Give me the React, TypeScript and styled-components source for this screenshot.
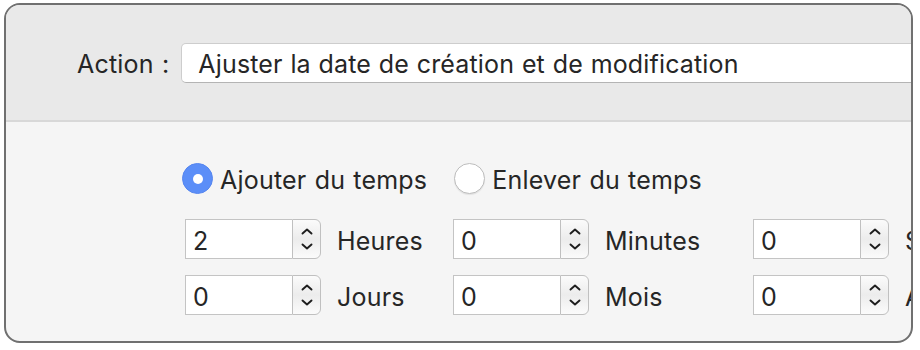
import styled, { createGlobalStyle } from 'styled-components';

const GlobalStyle = createGlobalStyle`
  body {
    margin: 0;
    background: #fff;
    font-family: Inter, "Liberation Sans", sans-serif;
    color: #262626;
  }
`;

const Page = styled.div`
  width: 920px;
  height: 350px;
  padding: 3px 0 0 4px;
  box-sizing: border-box;
  overflow: hidden;
`;

const Window = styled.div`
  width: 909px;
  height: 340px;
  box-sizing: border-box;
  border: 2px solid #707070;
  border-radius: 16px;
  overflow: hidden;
  background: #f5f5f5;
  display: flex;
  flex-direction: column;
`;

const Header = styled.div`
  height: 115px;
  flex: none;
  background: #e9e9e9;
  border-bottom: 2px solid #d8d8d8;
  display: flex;
  align-items: center;
  padding-left: 71px;
  gap: 12px;
  white-space: nowrap;
`;

const Label = styled.span`
  font-size: 25px;
  line-height: 1;
  letter-spacing: 0.2px;
  word-spacing: 1px;
  padding-top: 4px;
  white-space: nowrap;
`;

const Popup = styled.div`
  flex: none;
  width: 760px;
  height: 40px;
  box-sizing: border-box;
  background: #fff;
  border: 1px solid #cdcdcd;
  border-bottom-color: #b4b4b4;
  border-radius: 5px;
  display: flex;
  align-items: center;
  padding: 3px 0 0 16px;
  font-size: 25px;
  letter-spacing: 0.15px;
  word-spacing: 0.6px;
`;

const Body = styled.div`
  padding: 41px 0 0 176px;
  display: flex;
  flex-direction: column;
  gap: 25px;
`;

const RadioRow = styled.div`
  display: flex;
  gap: 27px;
`;

const RadioOption = styled.label`
  display: flex;
  align-items: center;
  gap: 7px;
`;

const RadioCircle = styled.span<{ $checked?: boolean }>`
  width: 31px;
  height: 31px;
  box-sizing: border-box;
  border-radius: 50%;
  display: flex;
  align-items: center;
  justify-content: center;
  background: ${(p) => (p.$checked ? '#5b8ef8' : '#fff')};
  border: 1px solid ${(p) => (p.$checked ? '#5686ef' : '#bdbdbd')};
  box-shadow: ${(p) => (p.$checked ? 'none' : '0 1px 1px rgba(0,0,0,0.08)')};

  &::after {
    content: '';
    display: ${(p) => (p.$checked ? 'block' : 'none')};
    width: 10px;
    height: 10px;
    border-radius: 50%;
    background: #fff;
  }
`;

const Grid = styled.div`
  margin-left: 3px;
  display: grid;
  grid-template-columns: 268px 300px auto;
  row-gap: 16px;
`;

const Cell = styled.div`
  display: flex;
  align-items: center;
  gap: 16px;
  white-space: nowrap;
`;

const Stepper = styled.div`
  display: flex;
  height: 40px;
  flex: none;
`;

const Field = styled.div`
  width: 107px;
  height: 40px;
  box-sizing: border-box;
  background: #fff;
  border: 1px solid #c4c4c4;
  border-right: none;
  display: flex;
  align-items: center;
  padding: 3px 0 0 7px;
  font-size: 25px;
`;

const Arrows = styled.div`
  width: 29px;
  height: 40px;
  box-sizing: border-box;
  border: 1px solid #c0c0c0;
  border-radius: 0 6px 6px 0;
  background: linear-gradient(#fbfbfb, #ececec 50%, #fbfbfb);
  display: flex;
  flex-direction: column;
  align-items: center;
  justify-content: center;
  gap: 8px;
`;

const Chevron = ({ down }: { down?: boolean }) => (
  <svg width="12" height="7" viewBox="0 0 12 7">
    <polyline
      points={down ? '1.5,1.5 6,5.5 10.5,1.5' : '1.5,5.5 6,1.5 10.5,5.5'}
      fill="none"
      stroke="#1e1e1e"
      strokeWidth="1.9"
      strokeLinecap="round"
      strokeLinejoin="round"
    />
  </svg>
);

const units = [
  { value: '2', label: 'Heures' },
  { value: '0', label: 'Minutes' },
  { value: '0', label: 'Secondes' },
  { value: '0', label: 'Jours' },
  { value: '0', label: 'Mois' },
  { value: '0', label: 'Années' },
];

const App = () => {
  return (
    <Page>
      <GlobalStyle />
      <Window>
        <Header>
          <Label>Action :</Label>
          <Popup>Ajuster la date de création et de modification</Popup>
        </Header>
        <Body>
          <RadioRow>
            <RadioOption>
              <RadioCircle $checked />
              <Label>Ajouter du temps</Label>
            </RadioOption>
            <RadioOption>
              <RadioCircle />
              <Label>Enlever du temps</Label>
            </RadioOption>
          </RadioRow>
          <Grid>
            {units.map((u) => (
              <Cell key={u.label}>
                <Stepper>
                  <Field>{u.value}</Field>
                  <Arrows>
                    <Chevron />
                    <Chevron down />
                  </Arrows>
                </Stepper>
                <Label>{u.label}</Label>
              </Cell>
            ))}
          </Grid>
        </Body>
      </Window>
    </Page>
  );
};

export default App;
